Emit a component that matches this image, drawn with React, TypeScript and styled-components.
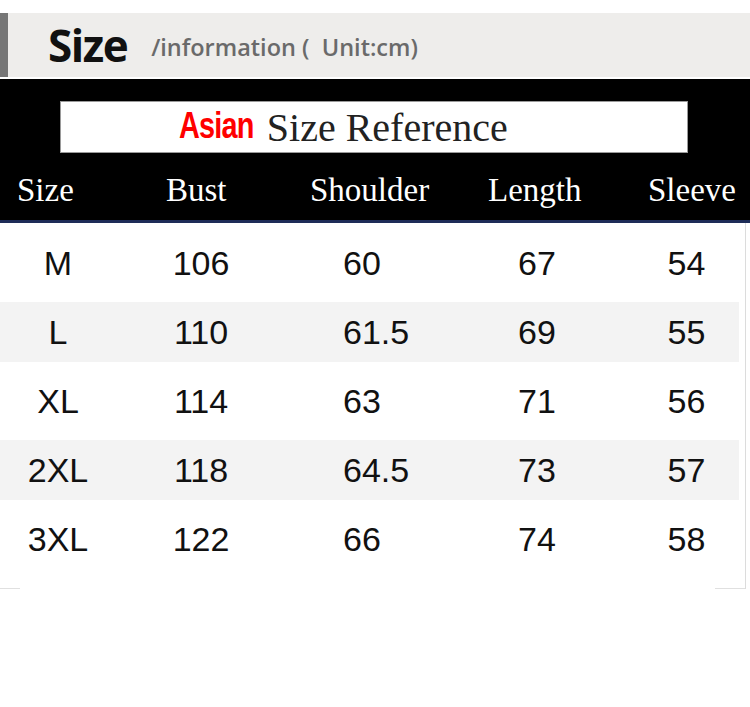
import React from 'react'
import styled, { createGlobalStyle } from 'styled-components'

const GlobalStyle = createGlobalStyle`
  body {
    margin: 0;
    background: #fff;
  }
`

const Page = styled.div`
  width: 750px;
  height: 707px;
  padding-top: 13px;
  box-sizing: border-box;
  background: #fff;
  overflow: hidden;
`

const TitleBar = styled.div`
  display: flex;
  align-items: center;
  height: 64px;
  padding-left: 40px;
  border-left: 8px solid #767676;
  background: #eeedeb;
  font-family: "Open Sans", "Liberation Sans", sans-serif;
`

const TitleBig = styled.span`
  font-size: 44px;
  font-weight: 700;
  letter-spacing: -1.5px;
  color: #111;
  margin-right: 24px;
`

const TitleSub = styled.span`
  font-size: 23.5px;
  font-weight: 600;
  color: #6a6a6a;
  margin-top: 4px;
`

const BlackPanel = styled.div`
  margin-top: 2px;
  height: 144px;
  box-sizing: border-box;
  padding-top: 22px;
  background: #000;
  border-bottom: 3px solid #1e2c58;
  display: flex;
  flex-direction: column;
`

const Banner = styled.div`
  margin: 0 62px 0 60px;
  height: 52px;
  box-sizing: border-box;
  border: 1px solid #9a9a9a;
  background: #fff;
  display: flex;
  align-items: center;
  padding-left: 118px;
`

const AsianLabel = styled.span`
  display: inline-block;
  font-family: "Liberation Sans", Arial, sans-serif;
  font-weight: 700;
  font-size: 37px;
  color: #f00;
  letter-spacing: -1px;
  transform: scaleX(0.78);
  transform-origin: left center;
  margin-right: -8px;
  margin-top: -2px;
`

const BannerText = styled.span`
  font-family: "Liberation Serif", serif;
  font-size: 40px;
  color: #222;
`

const HeaderRow = styled.div`
  flex: 1;
  display: grid;
  grid-template-columns: 149px 144px 178px 160px 1fr;
  align-items: center;
  padding: 7px 0 0 17px;
  font-family: "Liberation Serif", serif;
  font-size: 33px;
  color: #fff;
`

const Table = styled.div`
  width: 746px;
  box-sizing: border-box;
  padding: 10px 0 20px;
  border-right: 1px solid #dcdcdc;
  display: flex;
  flex-direction: column;
  gap: 9px;
  background:
    linear-gradient(to right, #e0e0e0 20px, transparent 20px, transparent 715px, #e0e0e0 715px)
    bottom / 100% 1px no-repeat;
`

const Row = styled.div<{ $striped: boolean }>`
  height: 60px;
  margin-right: 6px;
  display: grid;
  grid-template-columns: 116px 170px 154px 194px 1fr;
  align-items: center;
  background: ${p => (p.$striped ? '#f3f3f3' : 'transparent')};
  font-family: "Liberation Sans", Arial, sans-serif;
  font-size: 34px;
  color: #111;
`

const Cell = styled.span<{ $left?: boolean }>`
  text-align: ${p => (p.$left ? 'left' : 'center')};
  padding-left: ${p => (p.$left ? '57px' : '0')};
`

const headers = ['Size', 'Bust', 'Shoulder', 'Length', 'Sleeve']

const rows = [
  ['M', '106', '60', '67', '54'],
  ['L', '110', '61.5', '69', '55'],
  ['XL', '114', '63', '71', '56'],
  ['2XL', '118', '64.5', '73', '57'],
  ['3XL', '122', '66', '74', '58'],
]

export default function App() {
  return (
    <Page>
      <GlobalStyle />
      <TitleBar>
        <TitleBig>Size</TitleBig>
        <TitleSub>/information (&nbsp; Unit:cm)</TitleSub>
      </TitleBar>
      <BlackPanel>
        <Banner>
          <AsianLabel>Asian</AsianLabel>
          <BannerText>Size Reference</BannerText>
        </Banner>
        <HeaderRow>
          {headers.map(h => (
            <span key={h}>{h}</span>
          ))}
        </HeaderRow>
      </BlackPanel>
      <Table>
        {rows.map((r, i) => (
          <Row key={r[0]} $striped={i % 2 === 1}>
            {r.map((v, j) => (
              <Cell key={j} $left={j === 2}>
                {v}
              </Cell>
            ))}
          </Row>
        ))}
      </Table>
    </Page>
  )
}
